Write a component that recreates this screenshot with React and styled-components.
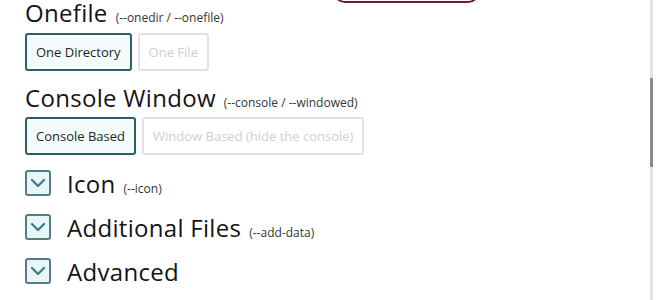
import styled, { createGlobalStyle } from "styled-components";

const Global = createGlobalStyle`
  html, body {
    margin: 0;
    padding: 0;
    background: #ffffff;
  }
  body {
    font-family: "Open Sans", "DejaVu Sans", sans-serif;
    color: #1c1c1c;
    overflow: hidden;
  }
`;

const Page = styled.div`
  position: relative;
  width: 660px;
  height: 300px;
  overflow: hidden;
  background: #fff;
`;

const Content = styled.div`
  margin-top: -3px;
  padding: 0 0 0 25px;
  display: flex;
  flex-direction: column;
`;

const TopStrip = styled.div`
  height: 3px;
  overflow: hidden;
  display: flex;
  align-items: flex-end;
  padding-left: 333px;
`;

const ConvertBtn = styled.div`
  width: 147px;
  height: 40px;
  flex: none;
  box-sizing: border-box;
  border: 2px solid #6e1d29;
  border-radius: 0 0 12px 12px;
  background: #fff;
`;

const Heading = styled.div`
  font-size: 24px;
  line-height: 26px;
  letter-spacing: 0.3px;
  display: flex;
  align-items: baseline;
  gap: 8px;
  margin-top: ${(p) => p.$top || 0}px;
  color: #141414;
`;

const Flag = styled.span`
  font-size: 12px;
  line-height: normal;
  letter-spacing: 0;
  color: #353535;
`;

const Row = styled.div`
  display: flex;
  gap: 6px;
  margin-top: ${(p) => p.$top || 0}px;
`;

const Toggle = styled.div`
  height: 38px;
  box-sizing: border-box;
  padding: 0 9px;
  display: flex;
  align-items: center;
  border-radius: 3px;
  font-size: 13px;
  border: 2px solid ${(p) => (p.$active ? "#2f5f66" : "#e2e2e2")};
  background: ${(p) => (p.$active ? "#f3fbfb" : "#fff")};
  color: ${(p) => (p.$active ? "#262626" : "#d0d0d0")};
`;

const Section = styled.div`
  display: flex;
  align-items: center;
  gap: 16px;
  height: 44px;
  margin-top: ${(p) => p.$top || 0}px;
`;

const Box = styled.div`
  width: 26px;
  height: 26px;
  box-sizing: border-box;
  border: 2px solid #557c82;
  border-radius: 3px;
  background: #e9f6f8;
  display: flex;
  align-items: center;
  justify-content: center;
  flex: none;
`;

const SectionTitle = styled.div`
  font-size: 24px;
  line-height: normal;
  letter-spacing: 0.3px;
  display: flex;
  align-items: baseline;
  gap: 8px;
  color: #141414;
`;

const Scroll = styled.div`
  position: absolute;
  top: 0;
  right: 7px;
  width: 3px;
  height: 300px;
  background: #e4e4e4;
`;

const Thumb = styled.div`
  margin-top: 78px;
  width: 3px;
  height: 89px;
  background: #8a8a8a;
`;

const Chevron = () => (
  <svg width="16" height="16" viewBox="0 0 16 16">
    <path
      d="M2 5 L8 11 L14 5"
      fill="none"
      stroke="#3a808b"
      strokeWidth="2.4"
      strokeLinecap="round"
      strokeLinejoin="round"
    />
  </svg>
);

const sections = [
  { title: "Icon", flag: "(--icon)" },
  { title: "Additional Files", flag: "(--add-data)" },
  { title: "Advanced", flag: "" },
];

export default function App() {
  return (
    <Page>
      <Global />
      <TopStrip>
        <ConvertBtn />
      </TopStrip>
      <Content>
        <Heading>
          Onefile <Flag>(--onedir / --onefile)</Flag>
        </Heading>
        <Row $top={7}>
          <Toggle $active>One Directory</Toggle>
          <Toggle>One File</Toggle>
        </Row>
        <Heading $top={14}>
          Console Window <Flag>(--console / --windowed)</Flag>
        </Heading>
        <Row $top={6}>
          <Toggle $active>Console Based</Toggle>
          <Toggle>Window Based (hide the console)</Toggle>
        </Row>
        {sections.map((s, i) => (
          <Section key={s.title} $top={i === 0 ? 6 : 0}>
            <Box>
              <Chevron />
            </Box>
            <SectionTitle>
              {s.title} {s.flag && <Flag>{s.flag}</Flag>}
            </SectionTitle>
          </Section>
        ))}
      </Content>
      <Scroll>
        <Thumb />
      </Scroll>
    </Page>
  );
}
